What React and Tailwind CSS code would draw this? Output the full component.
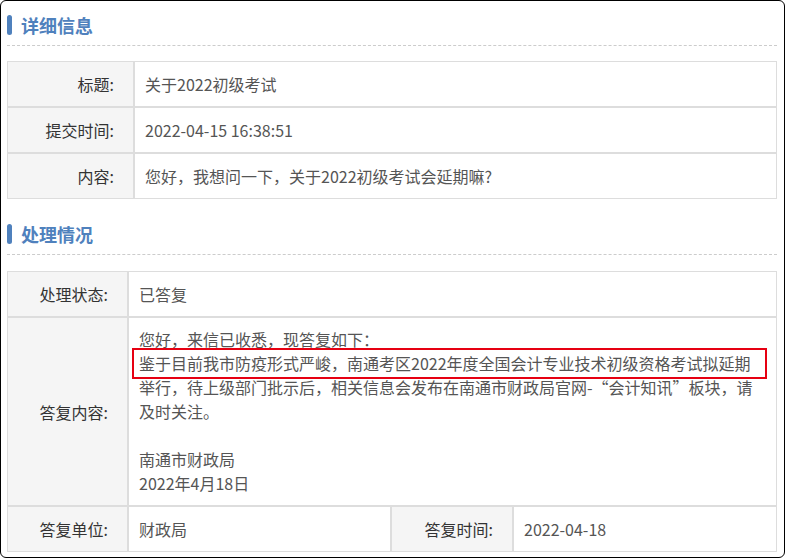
import React from 'react';

const font = "font-['Noto_Sans_CJK_SC','Noto_Sans',sans-serif]";

const SectionTitle = ({ children, top, bottom }) => (
  <div className={`${top} ${bottom}`}>
    <div className="flex h-[30px] items-center">
      <span className="mr-[9px] h-[20px] w-[5px] rounded-[3px] bg-[#4f81bd]" />
      <h2 className="text-[18px] font-bold leading-[30px] text-[#4f81bd]">{children}</h2>
    </div>
    <div className="mt-[5px] border-b border-dashed border-[#cccccc]" />
  </div>
);

const Label = ({ w, children, className = '' }) => (
  <div
    className={`${w} flex shrink-0 items-center justify-end border border-[#dddddd] bg-[#f5f5f5] pr-[19px] text-[#333333] ${className}`}
  >
    {children}
  </div>
);

const Value = ({ w = 'flex-1', children, className = '' }) => (
  <div className={`${w} flex items-center border border-[#dddddd] pl-[10px] text-[#555555] ${className}`}>
    {children}
  </div>
);

export default function App() {
  return (
    <div
      className={`${font} h-[558px] w-[785px] overflow-hidden rounded-[6px] border border-black bg-white pl-[6px] pr-[7px] text-[16px]`}
    >
      {/* 详细信息 */}
      <SectionTitle top="pt-[9px]" bottom="mb-[15px]">详细信息</SectionTitle>
      <div className="flex flex-col">
        <div className="flex h-[46px]">
          <Label w="w-[127px]">标题:</Label>
          <Value>关于2022初级考试</Value>
        </div>
        <div className="flex h-[46px]">
          <Label w="w-[127px]">提交时间:</Label>
          <Value>2022-04-15 16:38:51</Value>
        </div>
        <div className="flex h-[46px]">
          <Label w="w-[127px]">内容:</Label>
          <Value>您好，我想问一下，关于2022初级考试会延期嘛?</Value>
        </div>
      </div>

      {/* 处理情况 */}
      <SectionTitle top="pt-[20px]" bottom="mb-[16px]">处理情况</SectionTitle>
      <div className="flex flex-col">
        <div className="flex h-[46px]">
          <Label w="w-[121px]">处理状态:</Label>
          <Value>已答复</Value>
        </div>
        <div className="flex h-[189px]">
          <Label w="w-[121px]">答复内容:</Label>
          <div className="flex-1 border border-[#dddddd] pb-[10px] pl-[10px] pt-[9px] leading-[24px] text-[#555555]">
            <div className="whitespace-nowrap">您好，来信已收悉，现答复如下：</div>
            <div className="relative z-10 -mb-[4px] -ml-[7px] -mt-[3px] w-[635px] whitespace-nowrap border-2 border-[#e60012] bg-white pl-[5px] leading-[27px]">
              鉴于目前我市防疫形式严峻，南通考区2022年度全国会计专业技术初级资格考试拟延期
            </div>
            <div className="whitespace-nowrap">
              举行，待上级部门批示后，相关信息会发布在南通市财政局官网-“会计知讯”板块，请
            </div>
            <div>及时关注。</div>
            <div className="h-[24px]" />
            <div>南通市财政局</div>
            <div>2022年4月18日</div>
          </div>
        </div>
        <div className="flex h-[46px]">
          <Label w="w-[121px]">答复单位:</Label>
          <Value w="w-[263px]">财政局</Value>
          <Label w="w-[122px]">答复时间:</Label>
          <Value>2022-04-18</Value>
        </div>
      </div>
    </div>
  );
}
